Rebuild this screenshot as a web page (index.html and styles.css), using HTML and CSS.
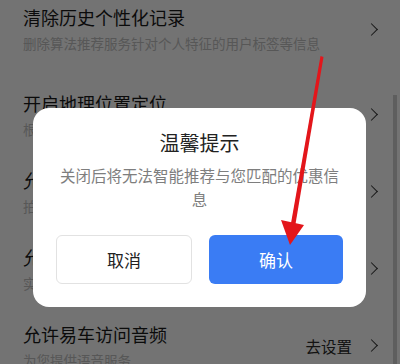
FILE: index.html
```html
<!DOCTYPE html>
<html lang="zh-CN">
<head>
    <meta charset="UTF-8">
    <meta name="viewport" content="width=device-width, initial-scale=1.0">
    <title>隐私设置</title>
    <link rel="stylesheet" href="styles.css">
</head>
<body>

<div class="settings">
    <div class="row first">
        <div class="info">
            <div class="title">清除历史个性化记录</div>
            <div class="desc">删除算法推荐服务针对个人特征的用户标签等信息</div>
        </div>
        <span class="chevron"></span>
    </div>
    <div class="row">
        <div class="info">
            <div class="title">开启地理位置定位</div>
            <div class="desc">根据您的位置为您推荐附近的经销商</div>
        </div>
        <span class="action">去设置</span>
        <span class="chevron"></span>
    </div>
    <div class="row">
        <div class="info">
            <div class="title">允许易车访问相机</div>
            <div class="desc">拍摄照片或视频进行发布</div>
        </div>
        <span class="action">去设置</span>
        <span class="chevron"></span>
    </div>
    <div class="row">
        <div class="info">
            <div class="title">允许易车访问相册</div>
            <div class="desc">实现图片或视频的上传</div>
        </div>
        <span class="action">去设置</span>
        <span class="chevron"></span>
    </div>
    <div class="row">
        <div class="info">
            <div class="title">允许易车访问音频</div>
            <div class="desc">为您提供语音服务</div>
        </div>
        <span class="action">去设置</span>
        <span class="chevron"></span>
    </div>
</div>

<!-- 遮罩 + 弹窗 -->
<div class="mask">
    <div class="scrollbar"></div>
</div>

<div class="dialog">
    <div class="dialog-title">温馨提示</div>
    <div class="dialog-msg">关闭后将无法智能推荐与您匹配的优惠信息</div>
    <div class="dialog-btns">
        <button class="btn btn-cancel">取消</button>
        <button class="btn btn-ok">确认</button>
    </div>
</div>

<svg class="arrow" width="400" height="364" viewBox="0 0 400 364">
    <polygon points="320.5,56 323.5,57 295,227 290.5,226" fill="#e3161b"/>
    <polygon points="281,220 304,225 290,245" fill="#e3161b"/>
</svg>

</body>
</html>
```

FILE: styles.css
```css
body {
    margin: 0;
    padding: 0;
    width: 400px;
    height: 364px;
    overflow: hidden;
    position: relative;
    background: #ffffff;
    font-family: "Noto Sans CJK SC", "Noto Sans", sans-serif;
}
.settings {
    margin-top: -9px;
}
.row {
    display: flex;
    align-items: center;
    height: 77px;
    padding: 0 22px 0 23px;
    box-sizing: border-box;
}
.row.first {
    height: 85px;
    padding-bottom: 9px;
}
.info {
    flex: 1;
    display: flex;
    flex-direction: column;
    gap: 4px;
}
.title {
    font-size: 18px;
    line-height: 24px;
    color: #1a1a1a;
}
.desc {
    font-size: 13.5px;
    line-height: 20px;
    color: #c2c2c2;
    white-space: nowrap;
}
.action {
    font-size: 15.5px;
    color: #2a2a2a;
    margin-right: 15px;
}
.chevron {
    width: 8px;
    height: 8px;
    border-top: 1.5px solid #333;
    border-right: 1.5px solid #333;
    transform: rotate(45deg);
    margin-right: 2px;
}
.mask {
    position: absolute;
    left: 0;
    top: 0;
    width: 400px;
    height: 364px;
    background: rgba(0, 0, 0, 0.55);
}
.scrollbar {
    position: absolute;
    left: 393px;
    top: 95px;
    width: 4px;
    height: 280px;
    background: rgba(0, 0, 0, 0.18);
}
.dialog {
    position: absolute;
    left: 33px;
    top: 108px;
    width: 333px;
    height: 199px;
    box-sizing: border-box;
    background: #ffffff;
    border-radius: 16px;
    padding: 21px 23px 23px;
    text-align: center;
}
.dialog-title {
    font-size: 20px;
    line-height: 28px;
    color: #222;
}
.dialog-msg {
    margin: 6px 1px 0;
    font-size: 15.5px;
    line-height: 24px;
    color: #7e7e7e;
}
.dialog-btns {
    display: flex;
    gap: 17px;
    margin-top: 24px;
}
.btn {
    flex: 1;
    height: 49px;
    border-radius: 6px;
    font-family: inherit;
    font-size: 17px;
    cursor: pointer;
}
.btn-cancel {
    background: #ffffff;
    border: 1px solid #e2e2e2;
    color: #222;
}
.btn-ok {
    background: #3a7cf4;
    border: none;
    color: #ffffff;
}
.arrow {
    position: absolute;
    left: 0;
    top: 0;
}
```
